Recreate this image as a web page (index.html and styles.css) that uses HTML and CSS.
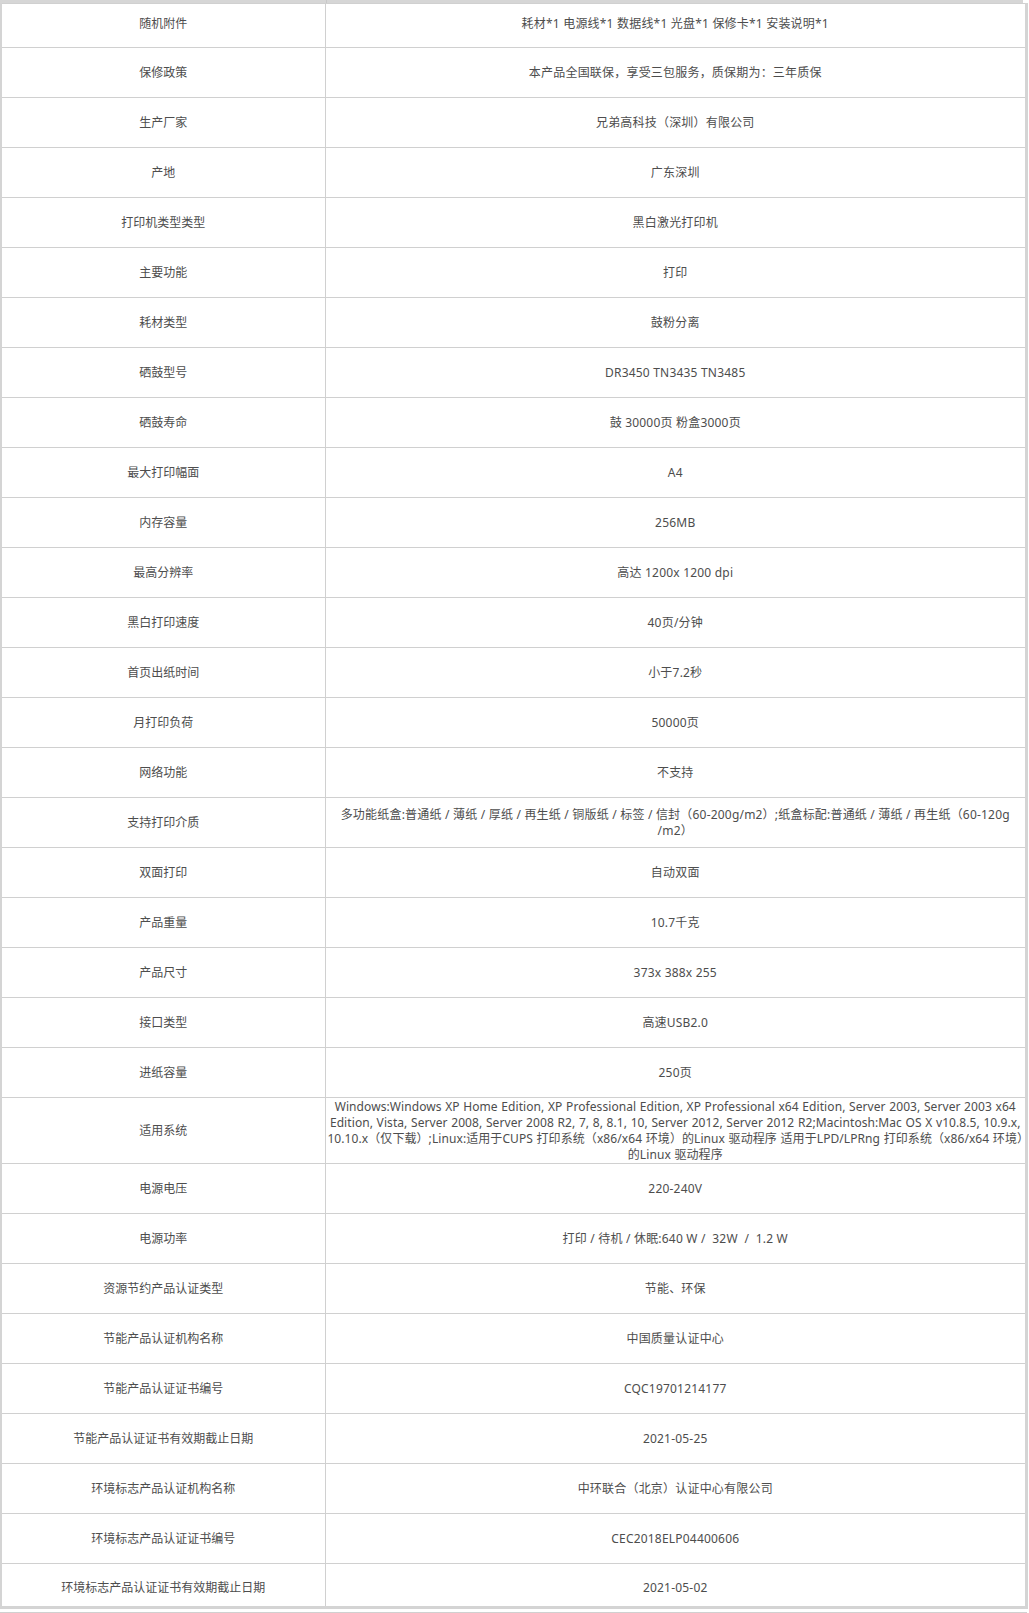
FILE: index.html
```html
<!DOCTYPE html>
<html lang="zh-CN">
<head>
<meta charset="utf-8">
<title>产品参数</title>
<link rel="stylesheet" href="styles.css">
</head>
<body>
<div class="prev"></div>
<table class="spec">
<colgroup><col class="kcol"><col class="vcol"></colgroup>
<tbody>
<tr class="first"><td>随机附件</td><td>耗材*1 电源线*1 数据线*1 光盘*1 保修卡*1 安装说明*1</td></tr>
<tr><td>保修政策</td><td>本产品全国联保，享受三包服务，质保期为：三年质保</td></tr>
<tr><td>生产厂家</td><td>兄弟高科技（深圳）有限公司</td></tr>
<tr><td>产地</td><td>广东深圳</td></tr>
<tr><td>打印机类型类型</td><td>黑白激光打印机</td></tr>
<tr><td>主要功能</td><td>打印</td></tr>
<tr><td>耗材类型</td><td>鼓粉分离</td></tr>
<tr><td>硒鼓型号</td><td>DR3450 TN3435 TN3485</td></tr>
<tr><td>硒鼓寿命</td><td>鼓 30000页 粉盒3000页</td></tr>
<tr><td>最大打印幅面</td><td>A4</td></tr>
<tr><td>内存容量</td><td>256MB</td></tr>
<tr><td>最高分辨率</td><td>高达 1200x 1200 dpi</td></tr>
<tr><td>黑白打印速度</td><td>40页/分钟</td></tr>
<tr><td>首页出纸时间</td><td>小于7.2秒</td></tr>
<tr><td>月打印负荷</td><td>50000页</td></tr>
<tr><td>网络功能</td><td>不支持</td></tr>
<tr><td>支持打印介质</td><td>多功能纸盒:普通纸 / 薄纸 / 厚纸 / 再生纸 / 铜版纸 / 标签 / 信封（60-200g/m2）;纸盒标配:普通纸 / 薄纸 / 再生纸（60-120g /m2）</td></tr>
<tr><td>双面打印</td><td>自动双面</td></tr>
<tr><td>产品重量</td><td>10.7千克</td></tr>
<tr><td>产品尺寸</td><td>373x 388x 255</td></tr>
<tr><td>接口类型</td><td>高速USB2.0</td></tr>
<tr><td>进纸容量</td><td>250页</td></tr>
<tr class="tall"><td>适用系统</td><td>Windows:Windows XP Home Edition, XP Professional Edition, XP Professional x64 Edition, Server 2003, Server 2003 x64 Edition, Vista, Server 2008, Server 2008 R2, 7, 8, 8.1, 10, Server 2012, Server 2012 R2;Macintosh:Mac OS X v10.8.5, 10.9.x, 10.10.x（仅下载）;Linux:适用于CUPS 打印系统（x86/x64 环境）的Linux 驱动程序 适用于LPD/LPRng 打印系统（x86/x64 环境）的Linux 驱动程序</td></tr>
<tr><td>电源电压</td><td>220-240V</td></tr>
<tr><td>电源功率</td><td>打印 / 待机 / 休眠:640 W / &nbsp;32W &nbsp;/ &nbsp;1.2 W</td></tr>
<tr><td>资源节约产品认证类型</td><td>节能、环保</td></tr>
<tr><td>节能产品认证机构名称</td><td>中国质量认证中心</td></tr>
<tr><td>节能产品认证证书编号</td><td>CQC19701214177</td></tr>
<tr><td>节能产品认证证书有效期截止日期</td><td>2021-05-25</td></tr>
<tr><td>环境标志产品认证机构名称</td><td>中环联合（北京）认证中心有限公司</td></tr>
<tr><td>环境标志产品认证证书编号</td><td>CEC2018ELP04400606</td></tr>
<tr class="last"><td>环境标志产品认证证书有效期截止日期</td><td>2021-05-02</td></tr>
</tbody>
</table>
<div class="next"></div>
</body>
</html>
```

FILE: styles.css
```css
html, body {
  margin: 0;
  padding: 0;
  background: #fff;
}

body {
  font-family: "Noto Sans", "Noto Sans CJK SC", sans-serif;
  font-size: 12px;
  color: #4d4d4d;
  width: 1029px;
}

.prev {
  height: 3px;
  width: 1023px;
  background:
    linear-gradient(to right, transparent 326px, #c8c8c8 326px, #c8c8c8 327px, transparent 327px),
    #d6d6d6;
}

.spec {
  width: 1028px;
  table-layout: fixed;
  border-collapse: collapse;
  border-top: 1px solid #e4e4e4;
  border-left: 2px solid #d4d4d4;
  border-right: 3px solid #d4d4d4;
  border-bottom: 3px solid #d4d4d4;
}

.kcol {
  width: 324px;
}

.spec td {
  border: 1px solid #d0d0d0;
  height: 50px;
  padding: 0 4px;
  text-align: center;
  vertical-align: middle;
  line-height: 16px;
  box-sizing: border-box;
}

.spec td + td {
  letter-spacing: 0.2px;
}

.spec tr.first td {
  height: 44px;
  padding-bottom: 4px;
}

.spec tr.last td {
  height: 44px;
  padding-top: 6px;
}

.spec tr.tall td {
  height: 66px;
  padding: 0 1px;
}

.spec tr.tall td + td {
  letter-spacing: 0.08px;
  word-spacing: 0.4px;
}

.next {
  margin-top: 3px;
  height: 2px;
  width: 1027px;
  border-top: 1px solid #d0d0d0;
  background: linear-gradient(to right, transparent 326px, #d0d0d0 326px, #d0d0d0 327px, transparent 327px);
}
```
